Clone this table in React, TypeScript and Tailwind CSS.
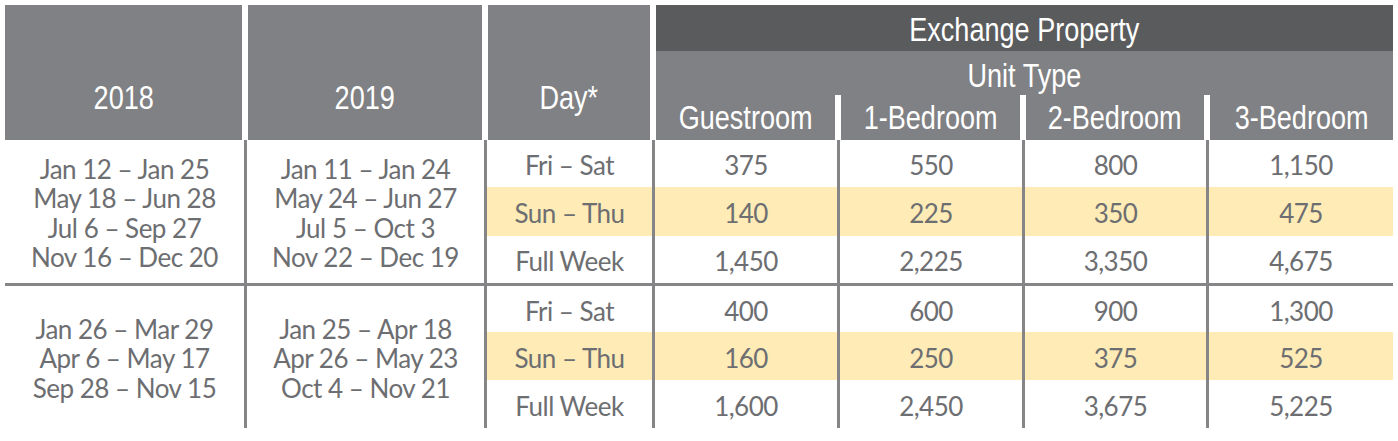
import React from "react";

const cols = "grid grid-cols-[239px_240px_168px_185px_185px_184px_187px]";
const headFont = { fontFamily: '"Liberation Sans", Arial, sans-serif' };

type Group = {
  y2018: string[];
  y2019: string[];
  rows: { day: string; vals: string[] }[];
};

const groups: Group[] = [
  {
    y2018: ["Jan 12 – Jan 25", "May 18 – Jun 28", "Jul 6 – Sep 27", "Nov 16 – Dec 20"],
    y2019: ["Jan 11 – Jan 24", "May 24 – Jun 27", "Jul 5 – Oct 3", "Nov 22 – Dec 19"],
    rows: [
      { day: "Fri – Sat", vals: ["375", "550", "800", "1,150"] },
      { day: "Sun – Thu", vals: ["140", "225", "350", "475"] },
      { day: "Full Week", vals: ["1,450", "2,225", "3,350", "4,675"] },
    ],
  },
  {
    y2018: ["Jan 26 – Mar 29", "Apr 6 – May 17", "Sep 28 – Nov 15"],
    y2019: ["Jan 25 – Apr 18", "Apr 26 – May 23", "Oct 4 – Nov 21"],
    rows: [
      { day: "Fri – Sat", vals: ["400", "600", "900", "1,300"] },
      { day: "Sun – Thu", vals: ["160", "250", "375", "525"] },
      { day: "Full Week", vals: ["1,600", "2,450", "3,675", "5,225"] },
    ],
  },
];

const unitTypes = ["Guestroom", "1-Bedroom", "2-Bedroom", "3-Bedroom"];

// narrow header lettering, like a condensed face
const Narrow: React.FC<{ children: React.ReactNode; className?: string }> = ({ children, className = "" }) => (
  <span className={`inline-block whitespace-nowrap scale-x-[0.82] ${className}`}>{children}</span>
);

const Header: React.FC = () => (
  <div className={`${cols} grid-rows-[46px_44px_45px] text-white text-[33px] leading-none`} style={headFont}>
    <div className="row-span-3 mr-[2px] bg-[#808184] pt-[46px] flex items-center justify-center">
      <Narrow className="pt-[3px]">2018</Narrow>
    </div>
    <div className="row-span-3 ml-[4px] mr-[2px] bg-[#808184] pt-[46px] flex items-center justify-center">
      <Narrow className="pt-[3px]">2019</Narrow>
    </div>
    <div className="row-span-3 ml-[4px] mr-[2px] bg-[#808184] pt-[46px] flex items-center justify-center">
      <Narrow className="pt-[3px]">Day*</Narrow>
    </div>
    <div className="col-span-4 ml-[4px] bg-[#5a5b5d] flex items-center justify-center">
      <Narrow className="pt-[2px]">Exchange Property</Narrow>
    </div>
    <div className="col-span-4 ml-[4px] bg-[#808184] flex items-center justify-center">
      <Narrow className="pt-[4px]">Unit Type</Narrow>
    </div>
    {unitTypes.map((u, i) => (
      <div
        key={u}
        className={`ml-[4px] ${i < 3 ? "mr-[2px]" : ""} bg-[#808184] flex items-end justify-center pb-[6px]`}
      >
        <Narrow>{u}</Narrow>
      </div>
    ))}
  </div>
);

const Body: React.FC<{ g: Group; tall: boolean }> = ({ g, tall }) => (
  <div className={`${cols} ${tall ? "grid-rows-[47px_49px_47px]" : "grid-rows-[46px_48px_48px]"}`}>
    <div className="row-span-3 flex flex-col items-center justify-center leading-[29.5px] pt-[4px]">
      {g.y2018.map((d) => (
        <div key={d}>{d}</div>
      ))}
    </div>
    <div className="row-span-3 border-l-[3px] border-[#858587] flex flex-col items-center justify-center leading-[29.5px] pt-[4px]">
      {g.y2019.map((d) => (
        <div key={d}>{d}</div>
      ))}
    </div>
    {g.rows.map((r, ri) => {
      const hl = ri === 1 ? "bg-[#feebb5]" : "";
      return (
        <React.Fragment key={ri}>
          <div className={`border-l-[3px] border-[#858587] ${hl} flex items-center justify-center pt-[4px]`}>
            {r.day}
          </div>
          {r.vals.map((v, vi) => (
            <div
              key={vi}
              className={`border-l-[3px] border-[#858587] ${hl} flex items-center justify-center pt-[4px]`}
            >
              {v}
            </div>
          ))}
        </React.Fragment>
      );
    })}
  </div>
);

export default function App() {
  return (
    <div className="w-[1398px] h-[441px] bg-white pl-[5px] pt-[5px] overflow-hidden">
      <Header />
      <div className="text-[#6d6e71] text-[26px] tracking-[-0.5px]" style={{ fontFamily: "Lato, sans-serif" }}>
        <Body g={groups[0]} tall />
        <div className="h-[3px] w-[1388px] bg-[#858587]" />
        <Body g={groups[1]} tall={false} />
      </div>
    </div>
  );
}
